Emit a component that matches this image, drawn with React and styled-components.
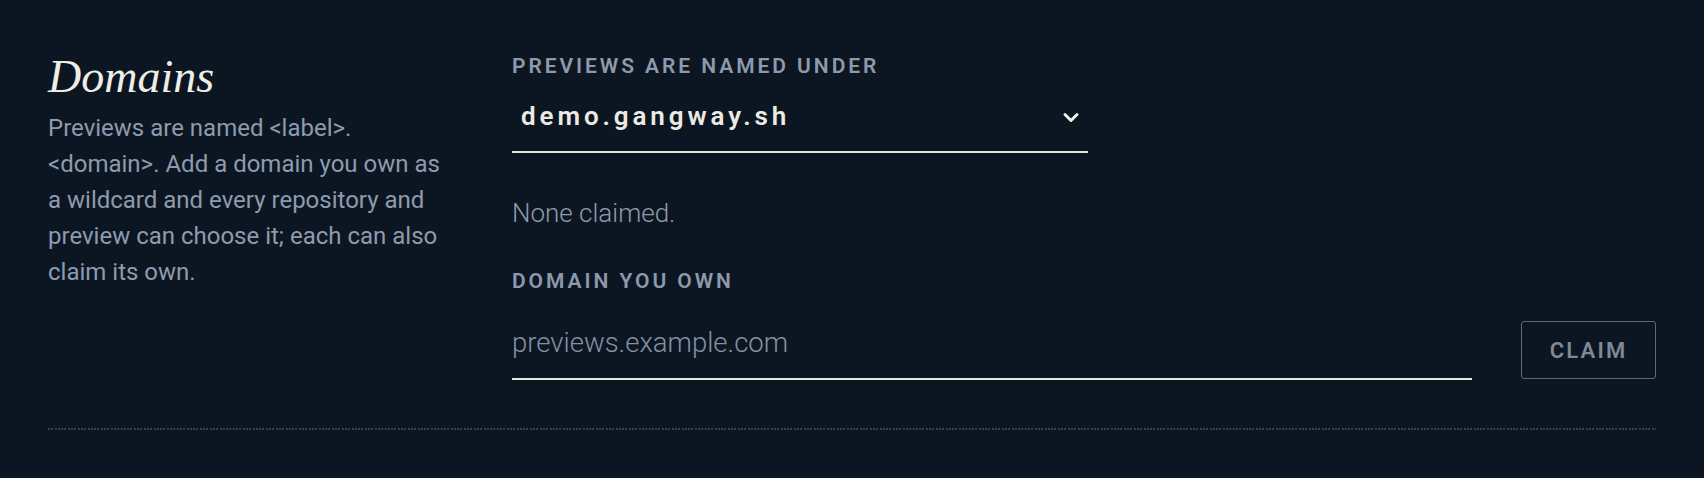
import React from "react";
import styled, { createGlobalStyle } from "styled-components";

const GlobalStyle = createGlobalStyle`
  html, body {
    margin: 0;
    padding: 0;
    background: #0c1623;
  }
  body {
    font-family: Roboto, "Liberation Sans", sans-serif;
  }
`;

const Page = styled.div`
  width: 100%;
  min-height: 478px;
  background: #0c1623;
  padding: 54px 48px 0;
  box-sizing: border-box;
`;

const Section = styled.section`
  display: grid;
  grid-template-columns: 392px 1fr;
  column-gap: 72px;
`;

const Intro = styled.div`
  display: flex;
  flex-direction: column;
`;

const Title = styled.h2`
  margin: 0;
  font-family: "Liberation Serif", "DejaVu Serif", serif;
  font-style: italic;
  font-weight: 400;
  font-size: 46px;
  line-height: 46px;
  color: #efeee6;
`;

const Description = styled.p`
  margin: 10px 0 0;
  font-size: 24px;
  line-height: 36px;
  color: #8e9bac;
`;

const Fields = styled.div`
  display: flex;
  flex-direction: column;
`;

const Label = styled.label`
  display: block;
  margin-top: ${(props) => props.$top || 0}px;
  font-size: 21px;
  line-height: 25px;
  font-weight: 600;
  letter-spacing: 0.14em;
  text-transform: uppercase;
  color: #8d9aab;
`;

const Select = styled.div`
  margin-top: 9px;
  width: 576px;
  box-sizing: border-box;
  display: flex;
  align-items: center;
  justify-content: space-between;
  padding: 10px 8px 17px 9px;
  border-bottom: 2px solid #e8e7df;
  cursor: pointer;
`;

const SelectValue = styled.span`
  font-size: 26px;
  line-height: 36px;
  font-weight: 600;
  letter-spacing: 0.15em;
  color: #ecebe3;
`;

const Chevron = styled.svg`
  width: 18px;
  height: 11px;
  margin-top: 3px;
`;

const Empty = styled.div`
  margin-top: 42px;
  font-size: 26px;
  line-height: 36px;
  font-weight: 300;
  color: #8e9bac;
`;

const ClaimRow = styled.div`
  margin-top: 11px;
  display: flex;
  align-items: flex-end;
  gap: 49px;
`;

const DomainInput = styled.input`
  flex: 1;
  min-width: 0;
  margin: 0;
  padding: 20px 0 17px;
  border: none;
  border-bottom: 2px solid #e8e7df;
  border-radius: 0;
  background: transparent;
  outline: none;
  font-family: Roboto, "Liberation Sans", sans-serif;
  font-size: 27.5px;
  line-height: 36px;
  font-weight: 300;
  color: #ecebe3;
  &::placeholder {
    color: #8391a2;
  }
`;

const ClaimButton = styled.button`
  width: 135px;
  height: 58px;
  margin-bottom: 1px;
  flex-shrink: 0;
  border: 1.5px solid #5e6975;
  border-radius: 3px;
  background: transparent;
  font-family: Roboto, "Liberation Sans", sans-serif;
  font-size: 22px;
  font-weight: 600;
  letter-spacing: 0.1em;
  color: #7e8995;
  cursor: pointer;
`;

const Divider = styled.div`
  margin-top: 48px;
  height: 2px;
  background: repeating-linear-gradient(
    90deg,
    #364150 0 2px,
    transparent 2px 3.3px
  );
`;

const App = () => {
  return (
    <>
      <GlobalStyle />
      <Page>
        <Section>
          <Intro>
            <Title>Domains</Title>
            <Description>
              Previews are named &lt;label&gt;.<wbr />&lt;domain&gt;. Add a
              domain you own as a wildcard and every repository and preview
              can choose it; each can also claim its own.
            </Description>
          </Intro>
          <Fields>
            <Label>Previews are named under</Label>
            <Select>
              <SelectValue>demo.gangway.sh</SelectValue>
              <Chevron viewBox="0 0 18 11" fill="none">
                <path
                  d="M3 2.5 L9 8.5 L15 2.5"
                  stroke="#efeee8"
                  strokeWidth="3"
                  strokeLinecap="round"
                  strokeLinejoin="round"
                />
              </Chevron>
            </Select>
            <Empty>None claimed.</Empty>
            <Label $top={38}>Domain you own</Label>
            <ClaimRow>
              <DomainInput placeholder="previews.example.com" />
              <ClaimButton>CLAIM</ClaimButton>
            </ClaimRow>
          </Fields>
        </Section>
        <Divider />
      </Page>
    </>
  );
};

export default App;
